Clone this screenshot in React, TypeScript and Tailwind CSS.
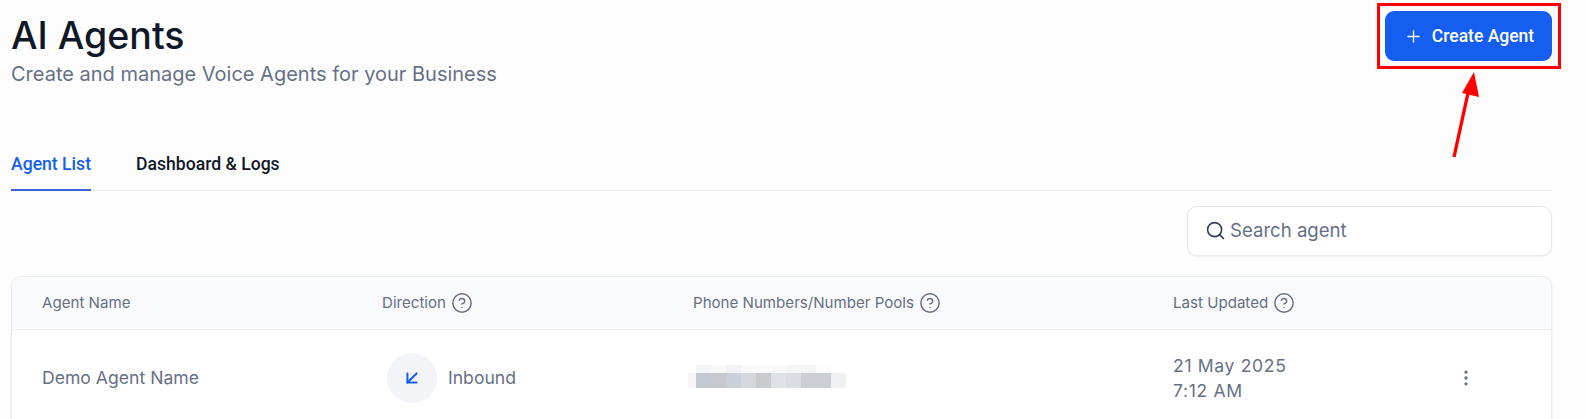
import { ArrowDownLeft, CircleHelp, EllipsisVertical, Plus, Search } from "lucide-react";

const topCells = ["", "bg-[#f3f4f5]", "bg-[#f7f8f8]", "bg-[#f1f2f3]", "bg-[#f9f9fa]", "bg-[#fafafa]", "bg-[#f9f9fa]", "bg-[#f4f5f5]", "bg-[#f3f4f5]", "bg-[#fbfbfb]"];
const mainCells = ["bg-[#c3c8d2]", "bg-[#c8c9d0]", "bg-[#c9d0da]", "bg-[#d4d8dc]", "bg-[#c9cbcf]", "bg-[#dfe3e7]", "bg-[#dadde1]", "bg-[#ccced5]", "bg-[#cbced4]", "bg-[#eff0f2]"];

function Head({ label, help = true, className }: { label: string; help?: boolean; className: string }) {
  return (
    <div className={`flex items-center gap-[5px] ${className}`}>
      <span>{label}</span>
      {help && <CircleHelp className="h-[22px] w-[22px] text-[#667085]" strokeWidth={1.6} />}
    </div>
  );
}

export default function App() {
  return (
    <div className="relative h-[419px] w-[1586px] overflow-hidden bg-[#fdfdfe] font-['Inter',sans-serif]">
      <div className="pl-[11px] pr-[34px]">
        <div className="flex items-start justify-between">
          <div className="pt-[12px]">
            <h1 className="text-[37.5px] leading-[48px] font-medium text-[#101828]">AI Agents</h1>
            <p className="text-[20px] leading-[28px] text-[#667085]">Create and manage Voice Agents for your Business</p>
          </div>
          <button className="mt-[11px] flex h-[50px] w-[167px] items-center justify-center gap-[9px] rounded-[9px] bg-[#155eef] pl-[1px] font-['Roboto',sans-serif] text-[17.5px] font-medium text-white">
            <Plus className="h-[19px] w-[19px]" strokeWidth={1.7} />
            Create Agent
          </button>
        </div>

        <div className="mt-[64px] flex h-[39px] gap-[45px] border-b border-[#eaecf0] font-['Roboto',sans-serif] text-[17.6px] font-medium leading-[24px]">
          <div className="h-[39px] w-[80px] whitespace-nowrap border-b-2 border-[#3f5fd8] text-[#155eef]">Agent List</div>
          <div className="text-[#101828]">Dashboard &amp; Logs</div>
        </div>

        <div className="mt-[15px] flex justify-end">
          <div className="flex h-[50px] w-[365px] items-center gap-[4px] rounded-[10px] border border-[#e4e7ec] bg-white pb-[1px] pl-[17px] text-[18.6px] text-[#667085] shadow-[0_1px_2px_rgba(16,24,40,0.05)]">
            <Search className="h-[21px] w-[21px] text-[#344054]" strokeWidth={1.8} />
            Search agent
          </div>
        </div>

        <div className="mt-[20px] h-[200px] rounded-t-[10px] border border-[#eaecf0] bg-white shadow-[0_1px_3px_rgba(16,24,40,0.08)]">
          <div className="flex h-[53px] items-center rounded-t-[10px] border-b border-[#eaecf0] bg-[#f9fafb] text-[15.1px] text-[#667085]">
            <Head label="Agent Name" help={false} className="w-[370px] pl-[30px]" />
            <Head label="Direction" className="w-[311px]" />
            <Head label="Phone Numbers/Number Pools" className="w-[480px]" />
            <Head label="Last Updated" className="" />
          </div>
          <div className="flex h-[96px] items-center text-[17.6px] text-[#667085]">
            <div className="w-[370px] pl-[30px]">Demo Agent Name</div>
            <div className="flex w-[311px] items-center gap-[11px] pl-[5px]">
              <div className="flex h-[50px] w-[50px] items-center justify-center rounded-full bg-[#f2f4f7]">
                <ArrowDownLeft className="h-[22px] w-[22px] text-[#155eef]" strokeWidth={2.2} />
              </div>
              Inbound
            </div>
            <div className="w-[480px]">
              <div className="ml-[-5px] flex flex-col pb-[3px]">
                <div className="flex h-[8px]">
                  {topCells.map((c, i) => <div key={i} className={`h-full ${i === 0 ? "w-[8px]" : "w-[15px]"} ${c}`} />)}
                </div>
                <div className="flex h-[15px]">
                  <div className="h-full w-[8px] bg-[#f6f5f4]" />
                  {mainCells.map((c, i) => <div key={i} className={`h-full w-[15px] ${c}`} />)}
                </div>
              </div>
            </div>
            <div className="w-[283px] leading-[25px] tracking-[0.65px]">
              <div>21 May 2025</div>
              <div>7:12 AM</div>
            </div>
            <EllipsisVertical className="h-[20px] w-[20px] text-[#667085]" strokeWidth={2} />
          </div>
        </div>
      </div>

      <div className="absolute left-[1377px] top-[3px] h-[66px] w-[184px] border-[3px] border-[#ff0000]" />
      <svg className="absolute left-[1440px] top-[60px]" width="50" height="110" viewBox="0 0 50 110" fill="none">
        <line x1="14" y1="97" x2="28" y2="33" stroke="#ff0000" strokeWidth="3.4" />
        <polygon points="34,12 39,37 22,33" fill="#ff0000" />
      </svg>
    </div>
  );
}
